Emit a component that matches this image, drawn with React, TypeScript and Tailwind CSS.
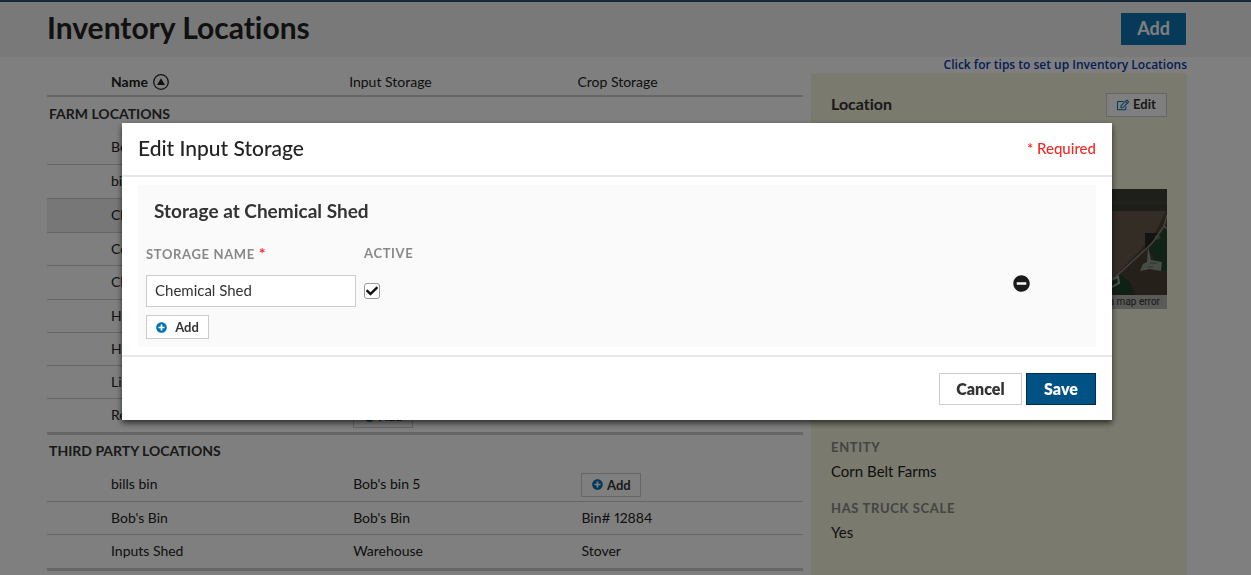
import React from "react";
import { FaCheck, FaMinusCircle, FaPlusCircle, FaRegEdit } from "react-icons/fa";

type Row = {
  name: string;
  input?: string;
  crop?: string;
  addInput?: boolean;
  addCrop?: boolean;
  tall?: boolean;
  selected?: boolean;
};

const farmRows: Row[] = [
  { name: "Ben", tall: true },
  { name: "bin", tall: true },
  { name: "Ch", tall: true, selected: true },
  { name: "Co" },
  { name: "Cl", tall: true },
  { name: "Ho" },
  { name: "Ho" },
  { name: "Lin" },
  { name: "Re", addInput: true },
];

const thirdPartyRows: Row[] = [
  { name: "bills bin", input: "Bob's bin 5", addCrop: true, tall: true },
  { name: "Bob's Bin", input: "Bob's Bin", crop: "Bin# 12884" },
  { name: "Inputs Shed", input: "Warehouse", crop: "Stover" },
];

function AddButton() {
  return (
    <button
      type="button"
      className="mt-0.5 flex h-6 w-[60px] items-center justify-center gap-1 border border-[#ccc] bg-white text-[13px] font-bold leading-4 text-[#333]"
    >
      <FaPlusCircle className="size-[11px] text-[#0073b5]" />
      Add
    </button>
  );
}

function Section({ title, rows }: { title: string; rows: Row[] }) {
  return (
    <tbody className="border-b-3 border-[#ccc]">
      <tr className="h-[34px]">
        <th colSpan={4} scope="colgroup" className="pl-0.5 text-left text-sm font-bold text-[#333]">
          {title}
        </th>
      </tr>
      {rows.map((row, index) => (
        <tr
          key={index}
          className={
            row.selected
              ? "h-[34px] border-b border-[#ccc] bg-[#eee]"
              : row.tall
                ? "h-[34px] border-b border-[#ccc]"
                : "h-[33px] border-b border-[#ccc] last:h-[35px] last:border-b-0"
          }
        >
          <td />
          <td>{row.name}</td>
          <td className="pl-1">{row.addInput ? <AddButton /> : row.input}</td>
          <td className="pl-1">{row.addCrop ? <AddButton /> : row.crop}</td>
        </tr>
      ))}
    </tbody>
  );
}

function SortIcon() {
  return (
    <svg viewBox="0 0 16 16" className="size-4" aria-hidden="true">
      <circle cx="8" cy="8" r="7.3" fill="none" stroke="currentColor" strokeWidth="1.3" />
      <path d="M8 4.2 12 11H4Z" fill="currentColor" />
    </svg>
  );
}

function FieldMap() {
  return (
    <div className="flex h-[120px] flex-col bg-[#3c3c30]">
      <svg
        viewBox="0 0 336 106"
        preserveAspectRatio="xMaxYMin slice"
        className="h-[106px] w-full"
        aria-hidden="true"
      >
        <defs>
          <filter id="soft">
            <feGaussianBlur stdDeviation="0.6" />
          </filter>
        </defs>
        <rect width="336" height="106" fill="#4c4137" />
        <rect width="336" height="22" fill="#3d3e35" />
        <path d="M280 12H336V15H280Z" fill="#45453a" />
        <path d="M280 22H335L322 48 281 90Z" fill="#665a4c" />
        <g filter="url(#soft)">
          <path d="M314 44H328L322 53 314 60Z" fill="#222a22" />
          <path d="M336 38V82H330L326 74 318 62 322 54Z" fill="#24452f" />
          <path d="M281 92 290 86 300 94 304 106H281Z" fill="#22402a" />
          <path d="M317 58 320 71 331 73 330 82 319 80 309 82 312 75 316 73Z" fill="#8f988f" />
          <path d="M319 74H326M317 78H322" stroke="#55665a" strokeWidth="1" />
          <path d="M282 90 287 88 288 94 281 98" fill="none" stroke="#a4a89e" strokeWidth="2" />
          <path d="M324 47 328 46 330 49 325 51Z" fill="#51705a" />
        </g>
        <path
          d="M281 91 316 59 322 53 333 37 336 26M333 37 336 40"
          fill="none"
          stroke="#8f8a82"
          strokeWidth="1.4"
        />
      </svg>
      <a
        href="#map-error"
        className="block bg-[#b4b4b0] pr-[7px] text-right font-['Roboto',sans-serif] text-[10px] leading-[14px] text-[#333]"
      >
        Report a map error
      </a>
    </div>
  );
}

function Detail({ label, value }: { label: string; value: string }) {
  return (
    <div className="pb-[13px]">
      <dt className="text-[13px] font-bold uppercase leading-5 tracking-wider text-[#888]">{label}</dt>
      <dd className="text-[15px] leading-7 text-[#222]">{value}</dd>
    </div>
  );
}

function StorageDialog() {
  return (
    <div className="fixed inset-0 flex items-start justify-center bg-black/50 pr-[17px] pt-[123px]">
      <section
        role="dialog"
        aria-modal="true"
        aria-labelledby="dialog-title"
        className="w-full max-w-[990px] bg-white shadow-[0_3px_6px_0_rgba(0,0,0,0.65)]"
      >
        <header className="flex h-[54px] items-center justify-between border-b-2 border-[#e8e8e8] px-4 pb-0.5">
          <h2 id="dialog-title" className="text-[21px] font-medium leading-7 text-[#222]">
            Edit Input Storage
          </h2>
          <p className="text-[15px] font-medium text-[#ee2a24]">* Required</p>
        </header>
        <div className="px-4 py-2">
          <div className="bg-[#fafafa] px-2 pb-2">
            <h3 className="pl-2 pt-[14px] text-[19px] font-bold leading-6 text-[#333]">Storage at Chemical Shed</h3>
            <div className="grid grid-cols-[210px_1fr_auto] items-center gap-x-2 pt-5">
              <label htmlFor="storage-name" className="h-5 text-[13px] font-bold leading-5 tracking-wider text-[#888]">
                STORAGE NAME <span className="text-base leading-5 text-[#ee2a24]">*</span>
              </label>
              <label htmlFor="active" className="h-5 text-[13px] font-bold leading-5 tracking-wider text-[#888]">
                ACTIVE
              </label>
              <span />
              <input
                id="storage-name"
                type="text"
                defaultValue="Chemical Shed"
                className="mt-3 h-8 w-full border border-[#ccc] bg-white px-2 pb-[3px] text-[15px] text-[#333]"
              />
              <span className="relative mt-3 size-4">
                <input
                  id="active"
                  type="checkbox"
                  defaultChecked
                  className="peer block size-4 appearance-none rounded-[3px] border border-[#999] bg-white"
                />
                <FaCheck className="pointer-events-none absolute left-0.5 top-0.5 hidden size-3 text-[#111] peer-checked:block" />
              </span>
              <button type="button" aria-label="Remove storage" className="mr-[58px] pb-1">
                <FaMinusCircle className="size-[17px] text-[#1a1a1a]" />
              </button>
            </div>
            <button
              type="button"
              className="mt-2 flex h-6 w-[63px] items-center justify-center gap-2 border border-[#ccc] bg-white text-[13px] font-bold leading-4 text-[#333]"
            >
              <FaPlusCircle className="size-[11px] text-[#0073b5]" />
              Add
            </button>
          </div>
        </div>
        <footer className="flex justify-end gap-1 border-t-2 border-[#e8e8e8] px-4 pb-[15px] pt-4">
          <button
            type="button"
            className="h-8 w-[83px] border border-[#ccc] bg-white text-base font-extrabold text-[#333]"
          >
            Cancel
          </button>
          <button
            type="button"
            className="h-8 w-[70px] border border-[#00304d] bg-[#005284] text-base font-extrabold text-white"
          >
            Save
          </button>
        </footer>
      </section>
    </div>
  );
}

export default function App() {
  return (
    <div className="flex min-h-screen flex-col bg-white font-['Lato',sans-serif] text-[#222] [font-variant-ligatures:no-common-ligatures]">
      <header className="flex h-[57px] items-center justify-between border-t-2 border-[#2c5578] bg-[#f2f2f2] pb-0.5 pl-[47px] pr-[65px]">
        <h1 className="pb-1 text-[30px] font-bold leading-9 text-[#222]">Inventory Locations</h1>
        <button type="button" className="h-8 w-[65px] bg-[#0e75b2] pb-0.5 text-lg font-bold text-white">
          Add
        </button>
      </header>
      <div className="flex flex-1 gap-2 pl-[47px] pr-16">
        <main className="flex-1 pt-2">
          <table className="w-full table-fixed border-collapse text-left text-sm [font-variant-numeric:proportional-nums]">
            <colgroup>
              <col className="w-16" />
              <col className="w-[31.5%]" />
              <col className="w-[30.2%]" />
              <col />
            </colgroup>
            <thead>
              <tr className="h-[31px] border-b-2 border-[#ccc]">
                <td />
                <th scope="col" className="pt-[3px] font-bold">
                  <button type="button" className="flex items-center gap-[5px]">
                    Name <SortIcon />
                  </button>
                </th>
                <th scope="col" className="pt-[3px] font-normal">Input Storage</th>
                <th scope="col" className="pt-[3px] font-normal">Crop Storage</th>
              </tr>
            </thead>
            <Section title="FARM LOCATIONS" rows={farmRows} />
            <Section title="THIRD PARTY LOCATIONS" rows={thirdPartyRows} />
          </table>
        </main>
        <aside className="flex w-[376px] flex-col">
          <a
            href="#tips"
            className="whitespace-nowrap text-right font-['Open_Sans',sans-serif] text-xs font-semibold leading-4 text-[#0b3ba8]"
          >
            Click for tips to set up Inventory Locations
          </a>
          <div className="flex-1 bg-[#f4f4de] px-5 pt-5">
            <div className="flex items-center justify-between">
              <h2 className="pb-0.5 text-base font-bold leading-5 text-[#333]">Location</h2>
              <button
                type="button"
                className="flex h-6 w-[61px] items-center justify-center gap-1 border border-[#ccc] bg-white text-[13px] font-bold text-[#333]"
              >
                <FaRegEdit className="size-3 text-[#0073b5]" />
                Edit
              </button>
            </div>
            <div className="pt-[72px]">
              <FieldMap />
            </div>
            <dl className="pt-32">
              <Detail label="Entity" value="Corn Belt Farms" />
              <Detail label="Has Truck Scale" value="Yes" />
            </dl>
          </div>
        </aside>
      </div>
      <StorageDialog />
    </div>
  );
}
